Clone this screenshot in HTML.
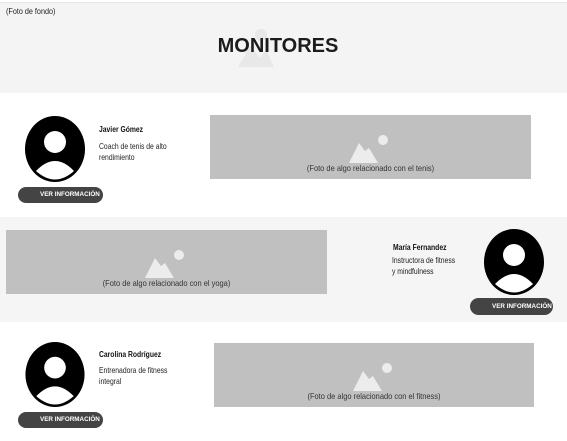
<!DOCTYPE html>
<html><head><meta charset="utf-8"><style>
*{margin:0;padding:0;box-sizing:border-box}
body{width:567px;height:441px;overflow:hidden;background:#fff;font-family:"Liberation Sans",Arial,sans-serif;position:relative;color:#222}
.a{position:absolute}
.hdr{left:0;top:2px;width:567px;height:91px;background:#f4f4f4;border-top:1px solid #e8e8e8}
.s2{left:0;top:217px;width:567px;height:105px;background:#f5f5f5}
.img{background:#c0c0c0;font-size:8.5px;color:#333;text-align:center}
.img span{position:absolute;left:0;right:0;transform:scaleX(0.88)}
.btn{background:#444;border-radius:9px;color:#fff;font-weight:bold;font-size:6.3px;height:16px;line-height:16px;padding-left:22px}
.nm{font-weight:bold;font-size:8.7px;color:#111;transform:scaleX(0.78);transform-origin:left;white-space:nowrap}
.ds{font-size:8.5px;line-height:11px;color:#222;transform:scaleX(0.8);transform-origin:left;white-space:nowrap}
</style></head><body>
<div class="a hdr"></div>
<div class="a" style="left:6px;top:6px;font-size:8.5px;transform:scaleX(0.85);transform-origin:left">(Foto de fondo)</div>
<svg class="a" style="left:236px;top:28px" width="40" height="40" viewBox="0 0 40 40"><circle cx="25" cy="7" r="6" fill="#e8e8e8"/><path d="M2 39 L14 18 L24 30 L30 22 L38 39Z" fill="#e8e8e8"/></svg>
<div class="a" style="left:0;width:556px;top:35px;text-align:center;font-weight:bold;font-size:20px;color:#1c1c1c">MONITORES</div>

<svg class="a" style="left:25px;top:116px" width="60" height="66" viewBox="0 0 60 66"><ellipse cx="30" cy="33" rx="30" ry="33" fill="#000"/><circle cx="30" cy="26" r="11" fill="#fff"/><path d="M11 55 Q30 35 49 55 Q30 72 11 55Z" fill="#fff"/></svg>
<div class="a nm" style="left:99px;top:124px">Javier Gómez</div>
<div class="a ds" style="left:99px;top:141px">Coach de tenis de alto<br>rendimiento</div>
<div class="a btn" style="left:18px;top:187px;width:85px">VER INFORMACIÓN</div>
<div class="a img" style="left:210px;top:115px;width:321px;height:64px"><svg class="a" style="left:139px;top:18px" width="40" height="30" viewBox="0 0 40 30"><circle cx="34" cy="7" r="5" fill="#ececec"/><path d="M0 30 L10 10 L16 18 L20 15 L29 30Z" fill="#ececec"/></svg><span style="top:48px">(Foto de algo relacionado con el tenis)</span></div>

<div class="a s2"></div>
<div class="a img" style="left:6px;top:230px;width:321px;height:64px"><svg class="a" style="left:139px;top:18px" width="40" height="30" viewBox="0 0 40 30"><circle cx="34" cy="7" r="5" fill="#ececec"/><path d="M0 30 L10 10 L16 18 L20 15 L29 30Z" fill="#ececec"/></svg><span style="top:48px">(Foto de algo relacionado con el yoga)</span></div>
<div class="a nm" style="left:393px;top:242px">María Fernandez</div>
<div class="a ds" style="left:392px;top:255px">Instructora de fitness<br>y mindfulness</div>
<svg class="a" style="left:482px;top:229px" width="64" height="66" viewBox="0 0 60 66"><ellipse cx="30" cy="33" rx="30" ry="33" fill="#000"/><circle cx="30" cy="26" r="11" fill="#fff"/><path d="M11 55 Q30 35 49 55 Q30 72 11 55Z" fill="#fff"/></svg>
<div class="a btn" style="left:470px;top:298px;width:83px;height:17px;line-height:17px">VER INFORMACIÓN</div>

<svg class="a" style="left:25px;top:342px" width="60" height="65" viewBox="0 0 60 66"><ellipse cx="30" cy="33" rx="30" ry="33" fill="#000"/><circle cx="30" cy="26" r="11" fill="#fff"/><path d="M11 55 Q30 35 49 55 Q30 72 11 55Z" fill="#fff"/></svg>
<div class="a nm" style="left:99px;top:349px">Carolina Rodríguez</div>
<div class="a ds" style="left:99px;top:365px">Entrenadora de fitness<br>integral</div>
<div class="a btn" style="left:18px;top:412px;width:85px">VER INFORMACIÓN</div>
<div class="a img" style="left:214px;top:343px;width:320px;height:64px"><svg class="a" style="left:139px;top:18px" width="40" height="30" viewBox="0 0 40 30"><circle cx="34" cy="7" r="5" fill="#ececec"/><path d="M0 30 L10 10 L16 18 L20 15 L29 30Z" fill="#ececec"/></svg><span style="top:48px">(Foto de algo relacionado con el fitness)</span></div>
</body></html>
